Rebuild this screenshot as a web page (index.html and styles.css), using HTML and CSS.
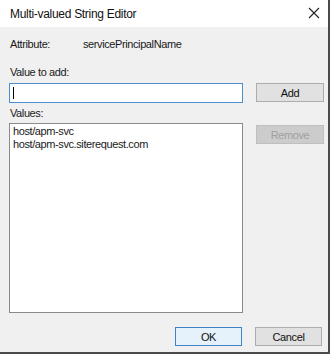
FILE: index.html
```html
<!DOCTYPE html>
<html>
<head>
<meta charset="utf-8">
<link rel="stylesheet" href="styles.css">
</head>
<body>
<div class="window">
  <div class="titlebar">
    <span class="title">Multi-valued String Editor</span>
    <svg class="close" width="12" height="12" viewBox="0 0 12 12"><path d="M1 1 L11 11 M11 1 L1 11" stroke="#222" stroke-width="1.1" fill="none"/></svg>
  </div>
  <div class="content">
    <div class="attr">
      <span class="attr-label">Attribute:</span>
      <span class="attr-value">servicePrincipalName</span>
    </div>
    <div class="label label-add">Value to add:</div>
    <div class="row">
      <div class="input"><span class="caret"></span></div>
      <div class="btn">Add</div>
    </div>
    <div class="label label-values">Values:</div>
    <div class="row row-top">
      <div class="list">
        <div>host/apm-svc</div>
        <div>host/apm-svc.siterequest.com</div>
      </div>
      <div class="btn disabled">Remove</div>
    </div>
    <div class="footer">
      <div class="btn ok">OK</div>
      <div class="btn">Cancel</div>
    </div>
  </div>
</div>
</body>
</html>
```
FILE: styles.css
```css
html, body { margin: 0; padding: 0; background: #fff; }
body { font-family: "Liberation Sans", Arial, sans-serif; font-size: 11px; color: #1a1a1a; letter-spacing: -0.4px; }
.window {
  width: 330px; height: 354px; box-sizing: border-box;
  background: #f0f0f0;
  border-right: 2px solid #4a4a4a; border-bottom: 2px solid #4a4a4a;
  display: flex; flex-direction: column;
}
.titlebar {
  height: 27px; background: #fff; display: flex; align-items: center;
  justify-content: space-between; padding: 0 8px 0 10px; flex: none;
}
.title { font-size: 12px; color: #111; letter-spacing: -0.3px; }
.close { margin-top: -2px; }
.content { padding: 0 0 0 9px; display: flex; flex-direction: column; flex: 1; }
.attr { display: flex; margin-top: 10px; line-height: 14px; padding-left: 1px; }
.attr-label { width: 73px; }
.label { line-height: 14px; padding-left: 1px; }
.label-add { margin-top: 14px; }
.label-values { margin-top: 3px; }
.row { display: flex; margin-top: 4px; }
.row-top { align-items: flex-start; margin-top: 3px; }
.input {
  width: 234px; height: 20px; box-sizing: border-box; background: #fff;
  border: 1px solid #4a90d0; position: relative;
}
.caret { position: absolute; left: 3px; top: 3px; width: 1px; height: 12px; background: #000; }
.btn {
  width: 68px; height: 19px; box-sizing: border-box; margin-left: 13px;
  background: #e1e1e1; border: 1px solid #adadad;
  display: flex; align-items: center; justify-content: center; color: #111;
}
.btn.disabled { background: #cccccc; border-color: #bfbfbf; color: #a0a0a0; margin-top: 2px; }
.list {
  width: 234px; height: 190px; box-sizing: border-box; background: #fff;
  border: 1px solid #8a8a8a; padding: 1px 3px; line-height: 13px;
}
.footer { display: flex; justify-content: flex-end; margin-top: 14px; padding-right: 6px; }
.btn.ok { width: 66px; border-color: #3c83c8; background: #e5f1fb; margin-left: 0; }
.footer .btn { width: 67px; }
```
